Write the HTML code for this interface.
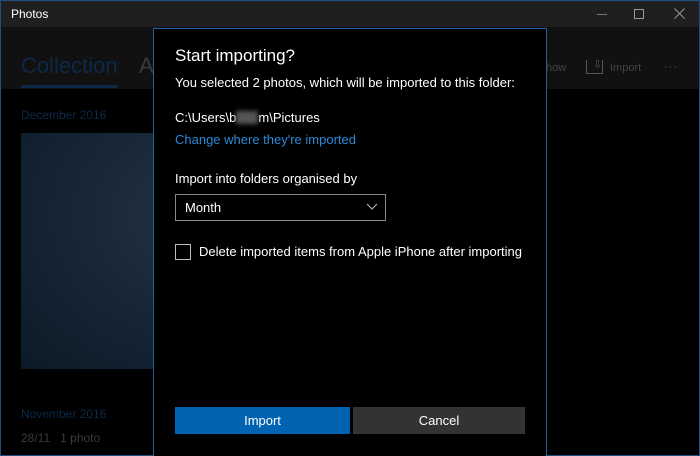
<!DOCTYPE html>
<html><head><style>
*{margin:0;padding:0;box-sizing:border-box}
body{width:700px;height:456px;background:#000;position:relative;overflow:hidden;font-family:"Segoe UI","Liberation Sans",sans-serif;color:#fff}
.abs{position:absolute}
</style></head><body>
<div class="abs" style="left:0;top:0;width:700px;height:456px;border:1px solid #1d4f80;border-top:none"></div>
<div class="abs" style="left:0;top:0;width:700px;height:1px;background:#1d4f80"></div>
<div class="abs" style="left:1px;top:1px;width:698px;height:26px;background:#1f1f1f"></div>
<div class="abs" style="left:11px;top:7px;font-size:12px;color:#fff">Photos</div>
<div class="abs" style="left:597px;top:14px;width:10px;height:1px;background:#777"></div>
<div class="abs" style="left:634px;top:9px;width:10px;height:10px;border:1px solid #999"></div>
<svg class="abs" style="left:674px;top:8px" width="11" height="11"><path d="M0.5 0.5 L10.5 10.5 M10.5 0.5 L0.5 10.5" stroke="#999"/></svg>
<div class="abs" style="left:1px;top:27px;width:698px;height:62px;background:#111"></div>
<div class="abs" style="left:21px;top:53px;font-size:22px;color:#0c2a48">Collection</div>
<div class="abs" style="left:21px;top:85px;width:97px;height:3px;background:#0c2a48"></div>
<div class="abs" style="left:139px;top:53px;font-size:22px;color:#3a3a3a">A</div>
<div class="abs" style="left:546px;top:62px;font-size:11px;color:#444">how</div>
<div class="abs" style="left:586px;top:60px;width:17px;height:14px;border:1px solid #555;border-top:none"></div>
<div class="abs" style="left:593px;top:58px;font-size:11px;color:#555">⇩</div>
<div class="abs" style="left:610px;top:62px;font-size:11px;color:#444">Import</div>
<div class="abs" style="left:664px;top:61px;font-size:11px;color:#555;letter-spacing:1px">···</div>
<div class="abs" style="left:21px;top:108px;font-size:12px;color:#0c2a48">December 2016</div>
<div class="abs" style="left:21px;top:133px;width:132px;height:236px;background:radial-gradient(ellipse at 150% 35%,#263646 0%,#182838 45%,#0b1a26 100%)"></div>
<div class="abs" style="left:21px;top:407px;font-size:12px;color:#0c2a48">November 2016</div>
<div class="abs" style="left:21px;top:431px;font-size:12px;color:#3a3a3a">28/11 &nbsp;&nbsp;1 photo</div>
<div class="abs" style="left:153px;top:28px;width:394px;height:428px;background:#000;border:1px solid #1d5fa0;border-bottom:none"></div>
<div class="abs" style="left:175px;top:46px;font-size:17px">Start importing?</div>
<div class="abs" style="left:175px;top:75px;font-size:13px">You selected 2 photos, which will be imported to this folder:</div>
<div class="abs" style="left:175px;top:110px;font-size:13px">C:\Users\b<span style="display:inline-block;width:22px;height:13px;background:#555;filter:blur(2px);vertical-align:-2px"></span>m\Pictures</div>
<div class="abs" style="left:175px;top:132px;font-size:13px;color:#2b8ad8">Change where they're imported</div>
<div class="abs" style="left:175px;top:171px;font-size:13px">Import into folders organised by</div>
<div class="abs" style="left:175px;top:194px;width:211px;height:27px;border:1px solid #888"></div>
<div class="abs" style="left:185px;top:200px;font-size:13px">Month</div>
<svg class="abs" style="left:366px;top:203px" width="12" height="8"><path d="M1 1 L6 6 L11 1" stroke="#bbb" fill="none"/></svg>
<div class="abs" style="left:175px;top:244px;width:16px;height:16px;border:1px solid #bbb"></div>
<div class="abs" style="left:199px;top:244px;font-size:13px">Delete imported items from Apple iPhone after importing</div>
<div class="abs" style="left:175px;top:407px;width:175px;height:27px;background:#0063b1;text-align:center;line-height:28px;font-size:13px">Import</div>
<div class="abs" style="left:353px;top:407px;width:172px;height:27px;background:#333;text-align:center;line-height:28px;font-size:13px">Cancel</div>
</body></html>
